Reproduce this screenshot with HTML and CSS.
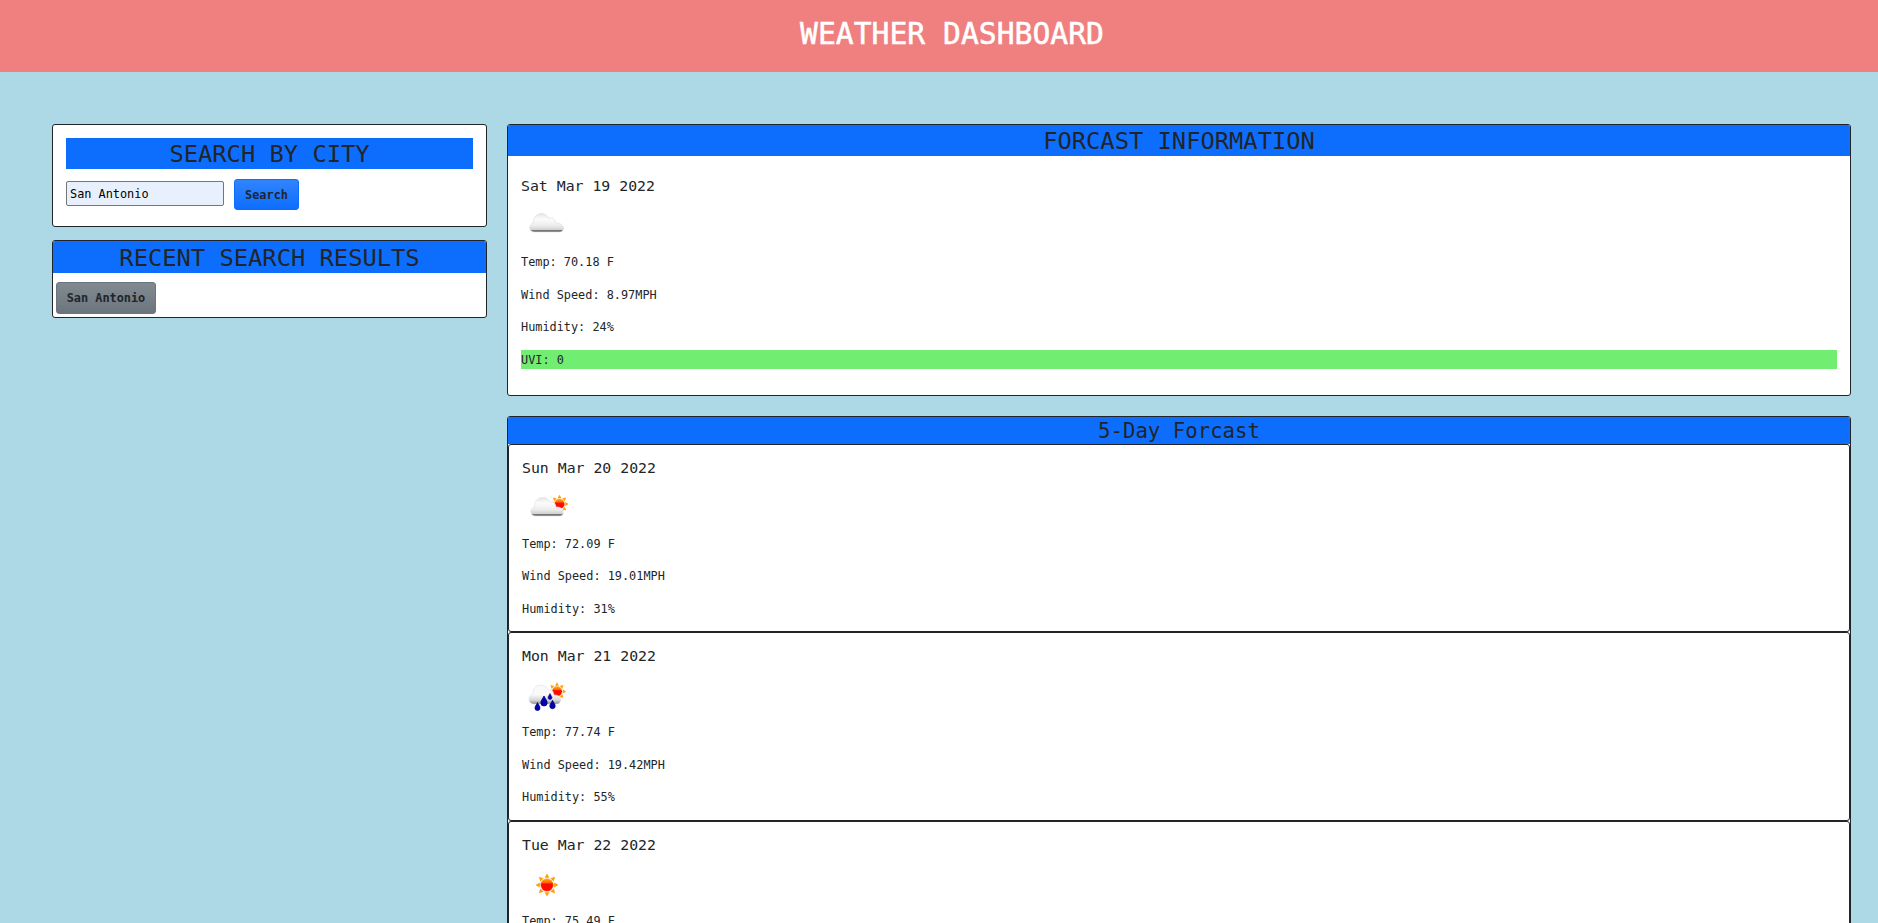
FILE: index.html
```html
<!DOCTYPE html>
<html lang="en">
<head>
<meta charset="utf-8">
<title>Weather Dashboard</title>
<link rel="stylesheet" href="styles.css">
</head>
<body>
<svg class="defs" width="0" height="0" aria-hidden="true">
  <defs>
    <linearGradient id="cloud-fill" x1="0" y1="0" x2="0" y2="1">
      <stop offset="0" stop-color="#e4e4e4"/><stop offset=".3" stop-color="#fcfcfc"/>
      <stop offset=".65" stop-color="#ededed"/><stop offset=".87" stop-color="#d2d2d2"/>
      <stop offset=".91" stop-color="#777"/><stop offset="1" stop-color="#777"/>
    </linearGradient>
    <linearGradient id="rain-cloud-fill" x1="0" y1="0" x2="0" y2="1">
      <stop offset="0" stop-color="#f9f9f9"/><stop offset=".5" stop-color="#fafafa"/>
      <stop offset=".8" stop-color="#d6d6d6"/><stop offset="1" stop-color="#8c8c8c"/>
    </linearGradient>
    <linearGradient id="sun-fill" x1="0" y1="0" x2="0" y2="1">
      <stop offset="0" stop-color="#ffb000"/><stop offset=".3" stop-color="#ff6a00"/>
      <stop offset=".42" stop-color="#ff0800"/><stop offset="1" stop-color="#ff0800"/>
    </linearGradient>
    <g id="sun">
      <g fill="#ff9d0a">
        <path id="ray" d="M-2.400 -7.200L0 -11.500L2.400 -7.200Z"/>
        <use href="#ray" transform="rotate(45)"/><use href="#ray" transform="rotate(90)"/>
        <use href="#ray" transform="rotate(135)"/><use href="#ray" transform="rotate(180)"/>
        <use href="#ray" transform="rotate(225)"/><use href="#ray" transform="rotate(270)"/>
        <use href="#ray" transform="rotate(315)"/>
      </g>
      <circle r="6.300" fill="url(#sun-fill)" stroke="#ff9a2b" stroke-width=".5"/>
    </g>
    <path id="drop" d="M0 -5C1 -2.500 3.200 -.5 3.200 1.800A3.200 3.200 0 0 1 -3.200 1.800C-3.200 -.5 -1 -2.500 0 -5Z" fill="#0000b4" stroke="#000070" stroke-width=".8"/>
  </defs>
</svg>

<header class="banner"><h1>WEATHER DASHBOARD</h1></header>

<main class="layout">
  <aside class="sidebar">
    <section class="card search">
      <h2 class="title">SEARCH BY CITY</h2>
      <form class="search-form">
        <input class="city" type="text" value="San Antonio" aria-label="City">
        <button class="btn primary" type="button">Search</button>
      </form>
    </section>
    <section class="card recent">
      <h2 class="title">RECENT SEARCH RESULTS</h2>
      <button class="btn secondary" type="button">San Antonio</button>
    </section>
  </aside>

  <div class="content">
    <section class="card">
      <h2 class="title">FORCAST INFORMATION</h2>
      <div class="today">
        <h5>Sat Mar 19 2022</h5>
        <svg class="icon" viewBox="0 0 50 50">
          <path d="M13 30C7.500 29.500 7.500 22 12.500 21C12 15 16.500 11.500 20.500 11.500C24 11.500 26.500 13.500 27.500 16.500C30 14.500 34.500 16.500 34.500 21C44 20.500 44.500 30 38.500 30Z" fill="url(#cloud-fill)" stroke="#d5d5d5" stroke-width=".5"/>
        </svg>
        <p>Temp: 70.18 F</p>
        <p>Wind Speed: 8.97MPH</p>
        <p>Humidity: 24%</p>
        <p class="uvi">UVI: 0</p>
      </div>
    </section>

    <section class="card five-day">
      <h3 class="title">5-Day Forcast</h3>
      <article class="card day">
        <h5>Sun Mar 20 2022</h5>
        <svg class="icon" viewBox="0 0 50 50">
          <use href="#sun" transform="translate(37.500 20) scale(.8)"/>
          <path d="M13 32C7.500 31.500 7.500 24 12.500 23C12 17 16 13.500 20.500 13.500C24.500 13.500 27 15.500 28 18.500C31 17 34 19.500 34 23C43 22 43 32 38 32Z" fill="url(#cloud-fill)" stroke="#ddd" stroke-width=".5"/>
        </svg>
        <p>Temp: 72.09 F</p>
        <p>Wind Speed: 19.01MPH</p>
        <p>Humidity: 31%</p>
      </article>
      <article class="card day">
        <h5>Mon Mar 21 2022</h5>
        <svg class="icon" viewBox="0 0 50 50">
          <use href="#sun" transform="translate(35 19.500) scale(.8)"/>
          <path d="M11 32C5.500 31 6 23 11 22C10.500 16.500 14 13 18.500 13C22.500 13 25 14.500 26 18C30 17 31.500 19.500 32 23C41 22 40 32 35 32Z" fill="url(#rain-cloud-fill)" stroke="#ddd" stroke-width=".5"/>
          <use href="#drop" transform="translate(15.500 34.500) scale(.8)"/>
          <use href="#drop" transform="translate(22 29) scale(1)"/>
          <use href="#drop" transform="translate(28 24.500) scale(.62)"/>
          <use href="#drop" transform="translate(30.500 32.500) scale(.85)"/>
        </svg>
        <p>Temp: 77.74 F</p>
        <p>Wind Speed: 19.42MPH</p>
        <p>Humidity: 55%</p>
      </article>
      <article class="card day">
        <h5>Tue Mar 22 2022</h5>
        <svg class="icon" viewBox="0 0 50 50"><use href="#sun" transform="translate(25 24)"/></svg>
        <p>Temp: 75.49 F</p>
        <p>Wind Speed: 8.12MPH</p>
        <p>Humidity: 30%</p>
      </article>
    </section>
  </div>
</main>
</body>
</html>
```
FILE: styles.css
```css
* { box-sizing: border-box; }

html { height: 100%; overflow: hidden; }

body {
  margin: 0;
  height: 100%;
  overflow: hidden;
  background: lightblue;
  color: #212529;
  font-family: "DejaVu Sans Mono", monospace;
  font-size: 11.875px;
  line-height: 19.5px;
}

h1, h2, h3, h5, p { margin: 0; font-weight: 400; }

.defs { position: absolute; }

.banner {
  height: 72px;
  padding: 13px 0 0 26px;
  background: lightcoral;
  color: #fff;
  text-align: center;
}

.banner h1 {
  font-size: 29.7px;
  line-height: 41px;
  -webkit-text-stroke: 0.5px #fff;
}

.layout {
  display: flex;
  align-items: flex-start;
  gap: 20px;
  padding: 52px 27px 0 52px;
}

.sidebar { flex: 0 0 435px; }
.content { flex: 1; }

.card {
  background: #fff;
  border: 1px solid #212529;
  border-radius: 3px;
}

.title {
  padding-top: 2px;
  background: #0d6efd;
  text-align: center;
  border-radius: 2px 2px 0 0;
}

h2.title { font-size: 23.75px; line-height: 29.2px; }
h3.title { font-size: 20.7px; line-height: 25.3px; }

.search { height: 103px; padding: 13px; margin-bottom: 13px; }
.search .title { border-radius: 0; }

.search-form {
  display: flex;
  align-items: flex-start;
  gap: 10px;
  padding-top: 9.8px;
}

.city {
  width: 158px;
  height: 25px;
  margin-top: 2px;
  padding: 1px 3px;
  border: 1px solid #767676;
  border-radius: 2px;
  background: #e8f0fe;
  color: #000;
  font: inherit;
}

.btn {
  height: 31px;
  padding: 2px 0 0;
  border: 1px solid #0d6efd;
  border-radius: 3px;
  color: #212529;
  font: bold 11.875px/19.5px "DejaVu Sans Mono", monospace;
}

.primary { width: 65px; background: linear-gradient(#3184fd, #0d6efd); }

.recent { height: 78px; }
.recent .title { line-height: 30px; }

.secondary {
  display: block;
  width: 100px;
  height: 32px;
  margin: 9px 0 0 3px;
  border-color: #6c757d;
  background: linear-gradient(#828a91, #6c757d);
}

h5 { font-size: 14.84px; line-height: 19.5px; margin-bottom: 6.5px; }
.icon { display: block; width: 50px; height: 50px; }
p { padding-top: 2px; line-height: 17.5px; margin-bottom: 13px; }

.today { padding: 19.8px 13px 13px; }
.uvi { background: #71ee71; }

.five-day { margin-top: 19.5px; }
.day { padding: 13px; }
.day p:last-child { margin-bottom: 0; }
```
